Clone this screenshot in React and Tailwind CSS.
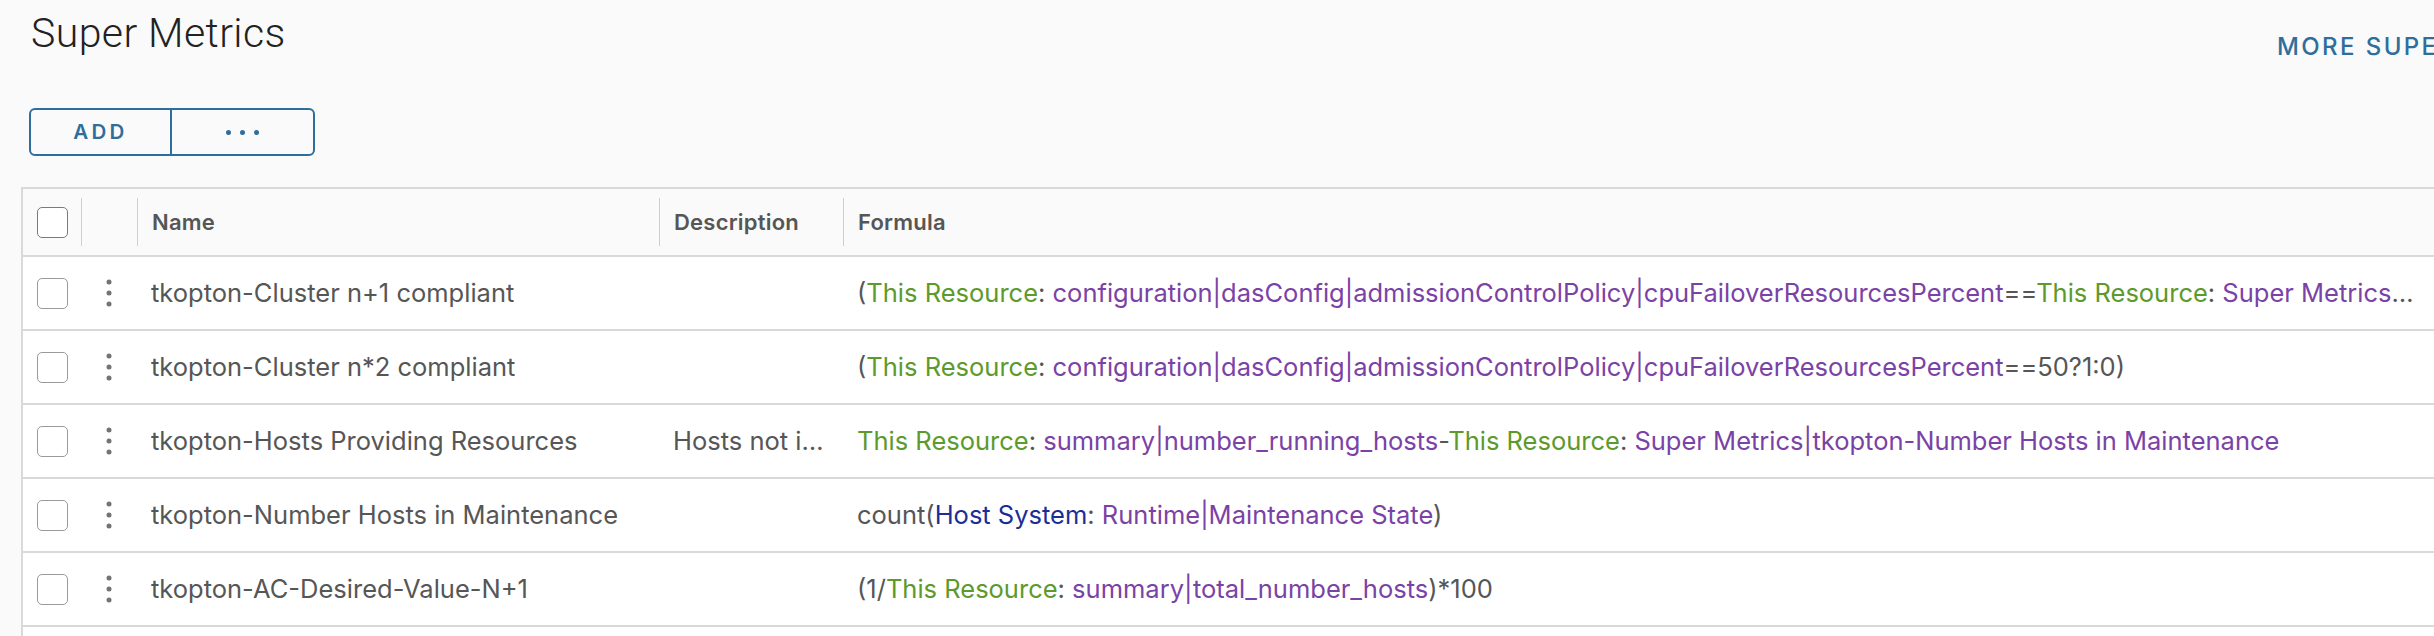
import React from 'react';

const tone = {
  d: 'text-[#565656]',
  g: 'text-[#5c9a2b]',
  p: 'text-[#7b42a6]',
  b: 'text-[#1c2e94]',
};

const rows = [
  {
    name: 'tkopton-Cluster n+1 compliant',
    desc: '',
    formula: [
      ['(', 'd'],
      ['This Resource', 'g'],
      [': ', 'd'],
      ['configuration|dasConfig|admissionControlPolicy|cpuFailoverResourcesPercent', 'p'],
      ['==', 'd'],
      ['This Resource', 'g'],
      [': ', 'd'],
      ['Super Metrics|tkopton-AC-Desired-Value-N+1', 'p'],
      ['?1:0)', 'd'],
    ],
  },
  {
    name: 'tkopton-Cluster n*2 compliant',
    desc: '',
    formula: [
      ['(', 'd'],
      ['This Resource', 'g'],
      [': ', 'd'],
      ['configuration|dasConfig|admissionControlPolicy|cpuFailoverResourcesPercent', 'p'],
      ['==50?1:0)', 'd'],
    ],
  },
  {
    name: 'tkopton-Hosts Providing Resources',
    desc: 'Hosts not in maintenance',
    formula: [
      ['This Resource', 'g'],
      [': ', 'd'],
      ['summary|number_running_hosts', 'p'],
      ['-', 'd'],
      ['This Resource', 'g'],
      [': ', 'd'],
      ['Super Metrics|tkopton-Number Hosts in Maintenance', 'p'],
    ],
  },
  {
    name: 'tkopton-Number Hosts in Maintenance',
    desc: '',
    formula: [
      ['count(', 'd'],
      ['Host System', 'b'],
      [': ', 'd'],
      ['Runtime|Maintenance State', 'p'],
      [')', 'd'],
    ],
  },
  {
    name: 'tkopton-AC-Desired-Value-N+1',
    desc: '',
    formula: [
      ['(1/', 'd'],
      ['This Resource', 'g'],
      [': ', 'd'],
      ['summary|total_number_hosts', 'p'],
      [')*100', 'd'],
    ],
  },
];

const cols = 'grid grid-cols-[58px_56px_522px_184px_minmax(0,1fr)]';

function Checkbox({ head }) {
  return (
    <div
      className={`w-[31px] h-[31px] rounded-[5px] bg-white border-[1.5px] ${
        head ? 'border-[#6f7d8a]' : 'border-[#9a9a9a]'
      }`}
    />
  );
}

function Kebab() {
  return (
    <svg width="8" height="30" viewBox="0 0 8 30">
      <circle cx="4" cy="4" r="2.5" fill="#737373" />
      <circle cx="4" cy="15" r="2.5" fill="#737373" />
      <circle cx="4" cy="26" r="2.5" fill="#737373" />
    </svg>
  );
}

function HeadCell({ label }) {
  return (
    <div className="flex items-center h-full min-w-0">
      <div className="w-px h-[48px] bg-[#cfcfcf] shrink-0" />
      {label && (
        <span className="pl-[14px] text-[22px] font-semibold tracking-[0.01em] text-[#565656]">
          {label}
        </span>
      )}
    </div>
  );
}

export default function App() {
  return (
    <div
      className="w-[2434px] h-[636px] overflow-hidden bg-[#fafafa]"
      style={{ fontFamily: 'Inter, "Noto Sans", sans-serif' }}
    >
      {/* Header */}
      <div className="flex items-start">
        <h1
          className="flex-1 pl-[31px] mt-[10px] text-[41px] leading-[47px] font-light tracking-[0.01em] text-[#222]"
          style={{ fontFamily: 'Roboto, "Noto Sans", sans-serif' }}
        >
          Super Metrics
        </h1>
        <a className="shrink-0 w-[157px] mt-[35px] whitespace-nowrap text-[24px] leading-[24px] font-medium tracking-[0.1em] text-[#2e6e9d]">
          MORE SUPER METRICS
        </a>
      </div>

      {/* Buttons */}
      <div className="ml-[29px] mt-[49px] flex w-[286px] h-[48px] rounded-[6px] border-2 border-[#2e6e9d] bg-[#fafafa]">
        <button className="w-[141px] flex items-center justify-center border-r-2 border-[#2e6e9d] text-[20.5px] font-semibold tracking-[0.16em] text-[#2e6e9d]">
          ADD
        </button>
        <button className="flex-1 flex items-center justify-center gap-[9px]">
          <span className="w-[5px] h-[5px] rounded-full bg-[#2e6e9d]" />
          <span className="w-[5px] h-[5px] rounded-full bg-[#2e6e9d]" />
          <span className="w-[5px] h-[5px] rounded-full bg-[#2e6e9d]" />
        </button>
      </div>

      {/* Table */}
      <div className="ml-[21px] mt-[31px] border-l-2 border-t-2 border-[#d9d9d9]">
        <div className={`${cols} h-[68px] border-b-2 border-[#d9d9d9] bg-[#fafafa]`}>
          <div className="flex items-center justify-center">
            <Checkbox head />
          </div>
          <HeadCell />
          <HeadCell label="Name" />
          <HeadCell label="Description" />
          <HeadCell label="Formula" />
        </div>
        {rows.map((r) => (
          <div
            key={r.name}
            className={`${cols} h-[74px] border-b-2 border-[#d9d9d9] bg-white text-[25.5px] text-[#565656]`}
          >
            <div className="flex items-center justify-center">
              <Checkbox />
            </div>
            <div className="flex items-center justify-center">
              <Kebab />
            </div>
            <div className="flex items-center pl-[14px] pr-[14px] min-w-0">
              <span className="truncate">{r.name}</span>
            </div>
            <div className="flex items-center pl-[14px] pr-[14px] min-w-0">
              <span className="truncate">{r.desc}</span>
            </div>
            <div className="flex items-center pl-[14px] pr-[14px] min-w-0">
              <span className="truncate">
                {r.formula.map(([t, k], i) => (
                  <span key={i} className={tone[k]}>
                    {t}
                  </span>
                ))}
              </span>
            </div>
          </div>
        ))}
        <div className={`${cols} h-[74px] bg-white`} />
      </div>
    </div>
  );
}
